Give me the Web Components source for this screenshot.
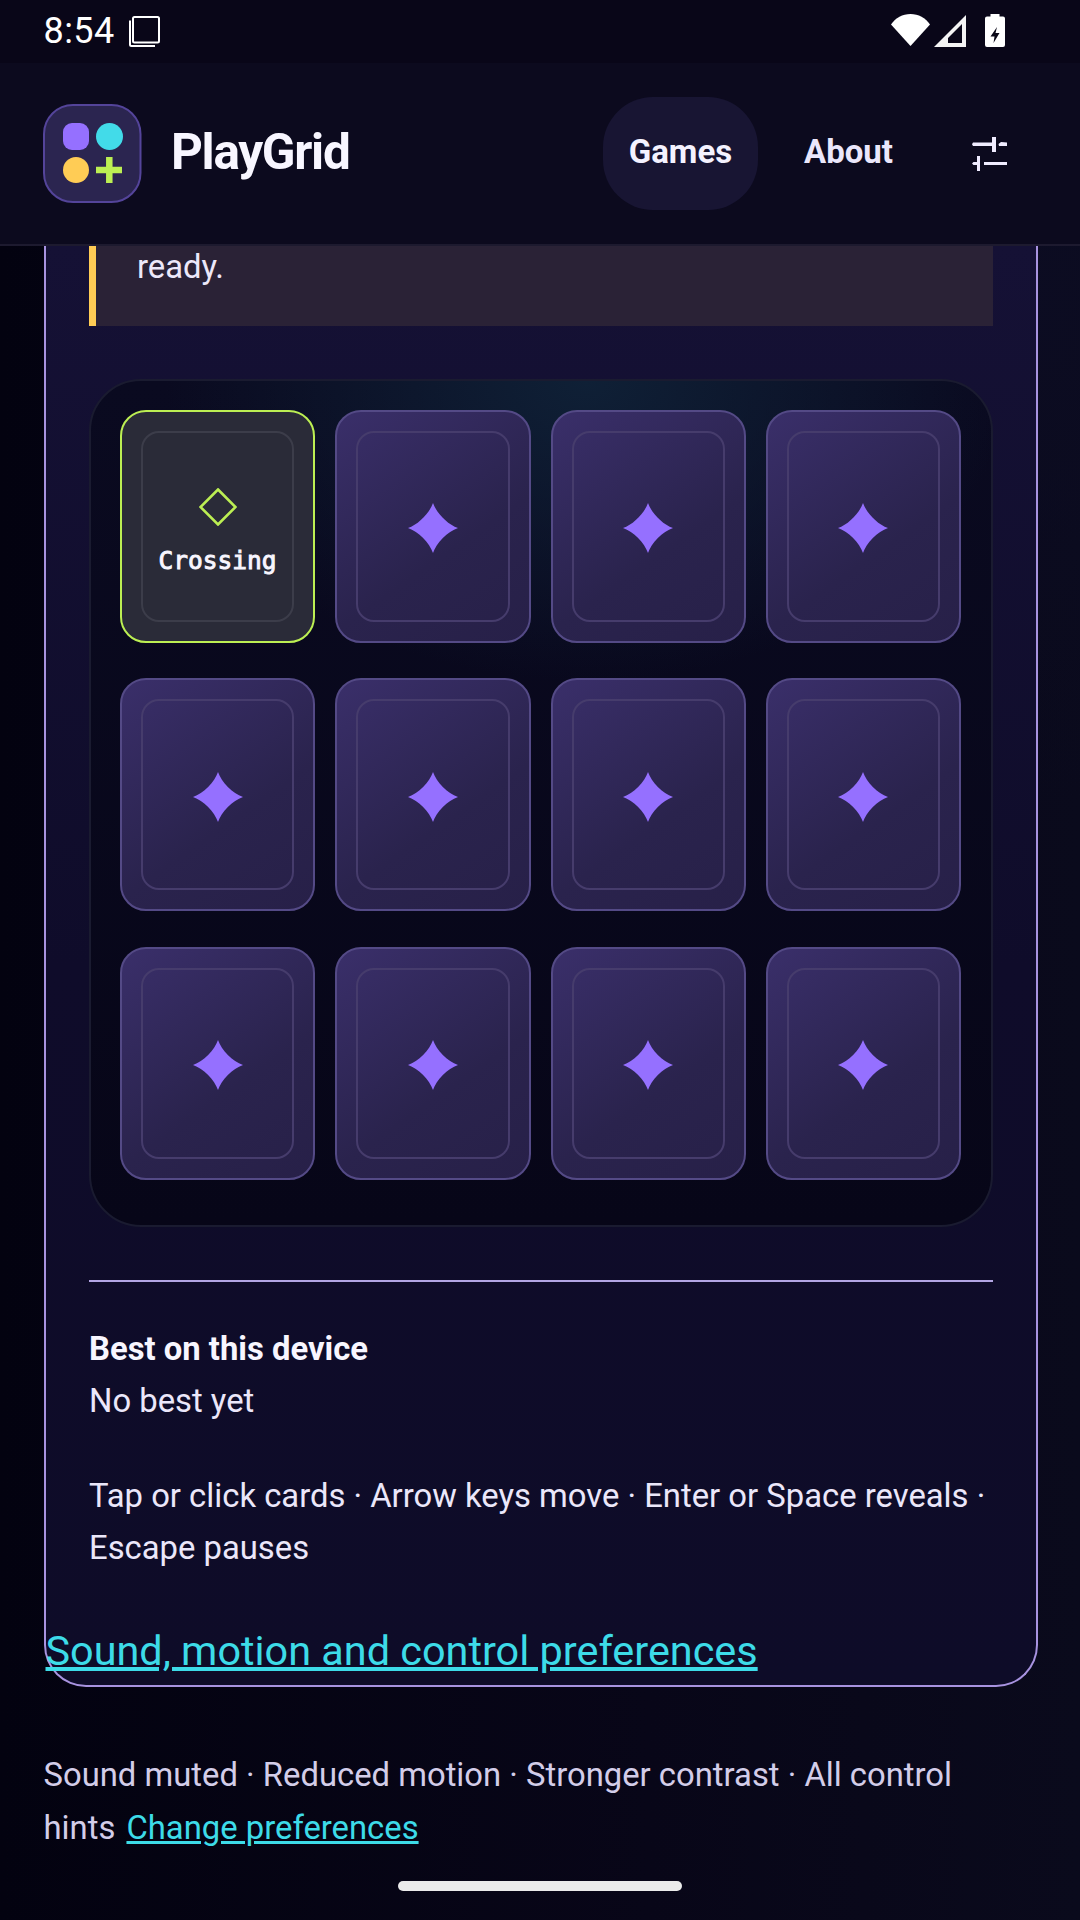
<!DOCTYPE html>
<html><head><meta charset="utf-8"><title>PlayGrid</title>
<style>
html,body{margin:0;padding:0;width:1080px;height:1920px;overflow:hidden;background:#05030f}
body{font-family:Roboto,"Noto Sans",sans-serif;color:#f0ecff;display:flex;flex-direction:column;
background:radial-gradient(700px 500px at 1000px 300px,#0c0c22 0,transparent 100%),linear-gradient(90deg,#030210,#080618 60%,#0a0a1c)}
</style></head><body>
<status-bar></status-bar>
<app-header></app-header>
<game-panel>
  <notice-box>ready.</notice-box>
  <memory-board>
    <memory-card state="open" label="Crossing"></memory-card>
    <memory-card></memory-card><memory-card></memory-card><memory-card></memory-card>
    <memory-card></memory-card><memory-card></memory-card><memory-card></memory-card><memory-card></memory-card>
    <memory-card></memory-card><memory-card></memory-card><memory-card></memory-card><memory-card></memory-card>
  </memory-board>
  <panel-info></panel-info>
</game-panel>
<prefs-footer></prefs-footer>
<home-indicator></home-indicator>
<script>
function def(name,html){
  customElements.define(name,class extends HTMLElement{
    connectedCallback(){
      if(this.shadowRoot)return;
      const r=this.attachShadow({mode:'open'});
      r.innerHTML=typeof html==='function'?html(this):html;
    }
  });
}
def('status-bar',`<style>
:host{display:flex;align-items:flex-start;height:63px;flex:none;background:#090618;color:#fff;box-sizing:border-box;padding:0 75px 0 43.500px}
.t{font:400 36px/1 Roboto,sans-serif;margin-top:13px;letter-spacing:.4px}
.copy{margin:16px 0 0 14px}
.sp{flex:1}
svg{display:block}
.w{margin-top:14px}.s{margin:15px 0 0 4px}.b{margin:14px 0 0 19px}
</style>
<span class="t">8:54</span>
<svg class="copy" width="32" height="32" viewBox="0 0 32 32" fill="none" stroke="#fff" stroke-width="2"><rect x="4" y="1" width="26" height="25.500" rx="1.500"/><path d="M1 4.500V28.500a1.500 1.500 0 0 0 1.500 1.500H26"/></svg>
<span class="sp"></span>
<svg class="w" width="39" height="32" viewBox="0 0 39 32"><path d="M0 10.500C4.500 4 11.500 0 19.500 0S34.500 4 39 10.500L19.500 32z" fill="#fff"/></svg>
<svg class="s" width="32" height="32" viewBox="0 0 32 32"><path d="M32 0V32H0zM14 23V28H28V9z" fill="#f4f4f4" fill-rule="evenodd"/></svg>
<svg class="b" width="20" height="33" viewBox="0 0 20 33"><path d="M5.500 0h9v2.500H18a2 2 0 0 1 2 2V31a2 2 0 0 1-2 2H2a2 2 0 0 1-2-2V4.500a2 2 0 0 1 2-2h3.500z" fill="#fff"/><path d="M12 13 5.500 22.500H9.500L8.500 29 14.500 19H10.500z" fill="#0a0818"/></svg>
`);
def('app-logo',`<style>
:host{display:block;width:99px;height:99px;flex:none}
svg{display:block}
</style>
<svg width="99" height="99" viewBox="0 0 99 99">
<rect x="1" y="1" width="96.500" height="97" rx="29" fill="#2b2550" stroke="#54449a" stroke-width="2"/>
<rect x="20" y="19" width="26" height="27" rx="9" fill="#9570ff"/>
<ellipse cx="66.500" cy="32.500" rx="13.500" ry="13.500" fill="#42dbe9"/>
<circle cx="33" cy="66" r="13" fill="#ffcc55"/>
<path d="M53 66h26M66.300 53v26" stroke="#bcef53" stroke-width="6.500" fill="none"/>
</svg>`);
def('app-header',`<style>
:host{display:flex;align-items:center;flex:none;height:183px;box-sizing:border-box;background:#0c0a1e;border-bottom:2px solid #1d1a2f;padding:0 0 0 43px;color:#f0ecff}
.brand{font:700 49.500px/1 Roboto,sans-serif;letter-spacing:-1.300px;color:#f8f6ff;margin-left:29px;flex:1;position:relative;top:-1px}
.nav{font:700 33px/1 Roboto,sans-serif;display:flex;align-items:center;box-sizing:border-box;position:relative;top:-2px}
.on{background:#181533;color:#f4f2ff;width:155px;height:113px;justify-content:center;border-radius:50px;top:0;padding-bottom:4px}
.about{margin-left:46px;color:#ebe7fb}
svg{display:block;margin:0 73px 0 79px}
</style>
<app-logo></app-logo>
<span class="brand">PlayGrid</span>
<span class="nav on">Games</span>
<span class="nav about">About</span>
<svg width="35" height="34" viewBox="0 0 35 34" fill="#f0ecff"><path d="M1 5.500h19v3.500H1L0 7.200zM20 0h4v15h-4zM29 5l6 .5V9h-8l-.5-2zM12 25h23v3H12zM5 19h3v15H5zM1.500 25H5v3H1.500L0 26.500z"/></svg>
`);
def('game-panel',`<style>
:host{display:flex;flex-direction:column;flex:none;width:994.500px;margin:0 0 0 43.500px;height:1441px;box-sizing:border-box;padding:0 43px 0 43.500px;border:2px solid #a893e0;border-top:0;border-radius:0 0 42px 42px;background:linear-gradient(180deg,#151135,#0f0c2a 50%,#0e0c28)}
</style><slot></slot>`);
def('notice-box',`<style>
:host{display:block;flex:none;height:80px;box-sizing:border-box;border-left:7px solid #ffcc55;background:#2a2236;padding:0 0 0 41px;font:400 32.800px/42px Roboto,sans-serif;color:#ece8fa;margin-bottom:53px}
</style><slot></slot>`);
def('memory-board',`<style>
:host{display:grid;flex:none;grid-template-columns:repeat(4,1fr);grid-auto-rows:232.800px;column-gap:20px;row-gap:35.700px;height:848px;box-sizing:border-box;padding:29px 30px 0 29px;border:2px solid #1a1b30;border-radius:52px;background:radial-gradient(420px 300px at 55% 0,#0f2036 0,transparent 100%),linear-gradient(180deg,#0a0a20,#070618)}
</style><slot></slot>`);
def('memory-card',h=>{
  const open=h.getAttribute('state')==='open';
  return `<style>
:host{display:block;box-sizing:border-box;border-radius:26px;padding:19px;border:2px solid ${open?'#bcef53':'#544a86'};background:${open?'#2a2b38':'linear-gradient(145deg,#3a2f6a,#2a234d 60%,#272048)'}}
.in{box-sizing:border-box;height:100%;border:2px solid ${open?'#3c3d4a':'#463c6c'};border-radius:18px;display:flex;flex-direction:column;align-items:center;justify-content:center}
.lab{font:400 24.500px/1 "DejaVu Sans Mono",monospace;-webkit-text-stroke:.9px #f8f6ff;color:#f8f6ff;margin-top:22.500px}
svg{display:block}
</style><div class="in">${open?
`<svg width="38" height="38" viewBox="0 0 38 38" style="margin-top:8.500px"><path d="M19 1.500 36.500 19 19 36.500 1.500 19z" fill="none" stroke="#bcef53" stroke-width="2.600"/></svg><span class="lab">${h.getAttribute('label')}</span>`:
`<svg width="50" height="50" viewBox="0 0 50 50" style="margin-top:4px"><path d="M25 0c3.500 10 14.500 21.500 25 25-10.500 3.500-21.500 15-25 25-3.500-10-14.500-21.500-25-25 10.500-3.500 21.500-15 25-25z" fill="#9570ff"/></svg>`}</div>`;
});
def('panel-info',`<style>
:host{display:block;font:400 32.800px/52px Roboto,sans-serif;color:#ebe7fa}
hr{border:0;height:2px;background:#b3a6e4;margin:53px 0 0}
.h{font-weight:700;color:#f8f6ff;margin-top:41px}
p{margin:43px 0 0}
a{display:block;color:#3ddbe8;font-size:41.400px;line-height:52px;text-decoration:underline;text-decoration-thickness:3.500px;margin:51px 0 0 -43.500px}
</style>
<hr><div class="h">Best on this device</div><div>No best yet</div>
<p>Tap or click cards · Arrow keys move · Enter or Space reveals · Escape pauses</p>
<a>Sound, motion and control preferences</a>`);
def('prefs-footer',`<style>
:host{display:block;flex:none;margin:62px 75px 0 43.500px;font:400 32.800px/52.500px Roboto,sans-serif;color:#d3cde9}
a{color:#3ddbe8;text-decoration:underline;text-decoration-thickness:2.500px;margin-left:3px}
</style>Sound muted · Reduced motion · Stronger contrast · All control hints <a>Change preferences</a>`);
def('home-indicator',`<style>
:host{display:block;flex:none;width:284px;height:10px;border-radius:5px;background:#ebebeb;margin:27px 0 0 398px}
</style>`);
</script>
</body></html>
